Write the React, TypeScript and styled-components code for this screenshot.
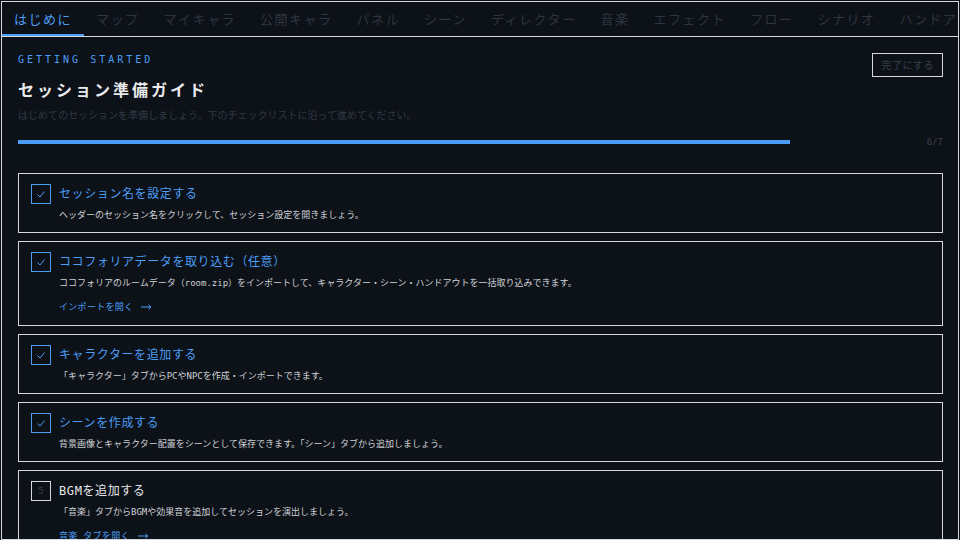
import React from "react";
import styled, { createGlobalStyle } from "styled-components";

const GlobalStyle = createGlobalStyle`
  html, body {
    margin: 0;
    padding: 0;
    background: #0d1118;
  }
  body {
    font-family: "DejaVu Sans Mono", "Noto Sans CJK JP", monospace;
  }
  * {
    box-sizing: border-box;
  }
`;

const Page = styled.div`
  padding: 1px;
  background: #0d1118;
`;

const Frame = styled.div`
  width: 958px;
  height: 539px;
  border: 1px solid #d5d9de;
  background: #0d1118;
  display: flex;
  flex-direction: column;
  overflow: hidden;
`;

const TabBar = styled.nav`
  display: flex;
  height: 35px;
  flex-shrink: 0;
  border-bottom: 1px solid #d5d9de;
  overflow: hidden;
  white-space: nowrap;
`;

const Tab = styled.div<{ $active?: boolean }>`
  flex-shrink: 0;
  display: flex;
  align-items: center;
  padding: 0 12px;
  font-family: "Noto Sans CJK JP", sans-serif;
  font-size: 13px;
  letter-spacing: 1.5px;
  color: ${(p) => (p.$active ? "#4a9ef5" : "#2f3540")};
  border-bottom: 2px solid ${(p) => (p.$active ? "#4a9ef5" : "transparent")};
`;

const Content = styled.main`
  flex: 1;
  padding: 16px 15px 0 16px;
  overflow: hidden;
`;

const Header = styled.div`
  display: flex;
  justify-content: space-between;
  align-items: flex-start;
`;

const HeaderText = styled.div`
  display: flex;
  flex-direction: column;
`;

const Eyebrow = styled.div`
  font-size: 10px;
  line-height: 14px;
  letter-spacing: 3px;
  color: #4a9ef5;
`;

const Title = styled.h1`
  margin: 12px 0 0;
  font-size: 16px;
  line-height: 24px;
  font-weight: 700;
  letter-spacing: 3px;
  color: #e8eaed;
`;

const Subtitle = styled.p`
  margin: 6px 0 0;
  font-size: 10px;
  line-height: 14px;
  color: #323944;
`;

const DoneButton = styled.button`
  font-family: "Noto Sans CJK JP", sans-serif;
  font-size: 10px;
  line-height: 14px;
  letter-spacing: 0.5px;
  color: #3a414c;
  background: transparent;
  border: 1px solid #d5d9de;
  padding: 4px 8px;
  cursor: pointer;
`;

const ProgressRow = styled.div`
  display: flex;
  align-items: center;
  gap: 8px;
  margin-top: 13px;
`;

const Track = styled.div`
  flex: 1;
  height: 4px;
  background: #0d1118;
`;

const Fill = styled.div`
  height: 100%;
  background: #4a9ef5;
`;

const Count = styled.span`
  font-size: 9px;
  line-height: 12px;
  color: #3a414c;
`;

const List = styled.div`
  display: flex;
  flex-direction: column;
  gap: 8px;
  margin-top: 25px;
`;

const Card = styled.div`
  display: flex;
  gap: 8px;
  padding: 10px 12px;
  border: 1px solid #d5d9de;
`;

const Check = styled.div<{ $done?: boolean }>`
  width: 20px;
  height: 20px;
  flex-shrink: 0;
  display: flex;
  align-items: center;
  justify-content: center;
  border: 1px solid ${(p) => (p.$done ? "#4a9ef5" : "#d5d9de")};
  color: #3a414c;
  font-size: 9px;
`;

const Body = styled.div`
  display: flex;
  flex-direction: column;
`;

const StepTitle = styled.div<{ $done?: boolean }>`
  font-size: 12px;
  line-height: 20px;
  letter-spacing: 0.6px;
  color: ${(p) => (p.$done ? "#4a9ef5" : "#e6e8eb")};
`;

const Desc = styled.div`
  margin-top: 4px;
  font-size: 9px;
  line-height: 14px;
  color: #cdd1d6;
`;

const Link = styled.a`
  display: flex;
  align-items: center;
  gap: 8px;
  margin-top: 10px;
  margin-bottom: 1px;
  font-size: 9px;
  line-height: 14px;
  letter-spacing: 0.3px;
  color: #4a9ef5;
  text-decoration: none;
`;

const tabs = [
  "はじめに",
  "マップ",
  "マイキャラ",
  "公開キャラ",
  "パネル",
  "シーン",
  "ディレクター",
  "音楽",
  "エフェクト",
  "フロー",
  "シナリオ",
  "ハンドアウト",
];

type Step = {
  title: string;
  desc: string;
  link?: string;
  done: boolean;
};

const steps: Step[] = [
  {
    title: "セッション名を設定する",
    desc: "ヘッダーのセッション名をクリックして、セッション設定を開きましょう。",
    done: true,
  },
  {
    title: "ココフォリアデータを取り込む（任意）",
    desc: "ココフォリアのルームデータ（room.zip）をインポートして、キャラクター・シーン・ハンドアウトを一括取り込みできます。",
    link: "インポートを開く",
    done: true,
  },
  {
    title: "キャラクターを追加する",
    desc: "「キャラクター」タブからPCやNPCを作成・インポートできます。",
    done: true,
  },
  {
    title: "シーンを作成する",
    desc: "背景画像とキャラクター配置をシーンとして保存できます。「シーン」タブから追加しましょう。",
    done: true,
  },
  {
    title: "BGMを追加する",
    desc: "「音楽」タブからBGMや効果音を追加してセッションを演出しましょう。",
    link: "音楽 タブを開く",
    done: false,
  },
  {
    title: "ハンドアウトを配布する",
    desc: "「ハンドアウト」タブから秘匿情報をプレイヤーに配布できます。",
    done: true,
  },
];

const CheckMark = () => (
  <svg width="10" height="10" viewBox="0 0 10 10">
    <polyline points="1.5,5.5 4,8 8.5,2.5" fill="none" stroke="#4a9ef5" strokeWidth="1" />
  </svg>
);

const Arrow = () => (
  <svg width="11" height="6" viewBox="0 0 11 6">
    <path d="M0 3 H10 M7.5 0.8 L10 3 L7.5 5.2" fill="none" stroke="#4a9ef5" strokeWidth="1" />
  </svg>
);

const App = () => {
  const doneCount = 6;
  const total = 7;
  return (
    <Page>
      <GlobalStyle />
      <Frame>
        <TabBar>
          {tabs.map((t, i) => (
            <Tab key={t} $active={i === 0}>
              {t}
            </Tab>
          ))}
        </TabBar>
        <Content>
          <Header>
            <HeaderText>
              <Eyebrow>GETTING STARTED</Eyebrow>
              <Title>セッション準備ガイド</Title>
              <Subtitle>
                はじめてのセッションを準備しましょう。下のチェックリストに沿って進めてください。
              </Subtitle>
            </HeaderText>
            <DoneButton>完了にする</DoneButton>
          </Header>
          <ProgressRow>
            <Track>
              <Fill style={{ width: `${(doneCount / total) * 100}%` }} />
            </Track>
            <Count>
              {doneCount}/{total}
            </Count>
          </ProgressRow>
          <List>
            {steps.map((s, i) => (
              <Card key={s.title}>
                <Check $done={s.done}>{s.done ? <CheckMark /> : i + 1}</Check>
                <Body>
                  <StepTitle $done={s.done}>{s.title}</StepTitle>
                  <Desc>{s.desc}</Desc>
                  {s.link && (
                    <Link href="#">
                      {s.link}
                      <Arrow />
                    </Link>
                  )}
                </Body>
              </Card>
            ))}
          </List>
        </Content>
      </Frame>
    </Page>
  );
};

export default App;
